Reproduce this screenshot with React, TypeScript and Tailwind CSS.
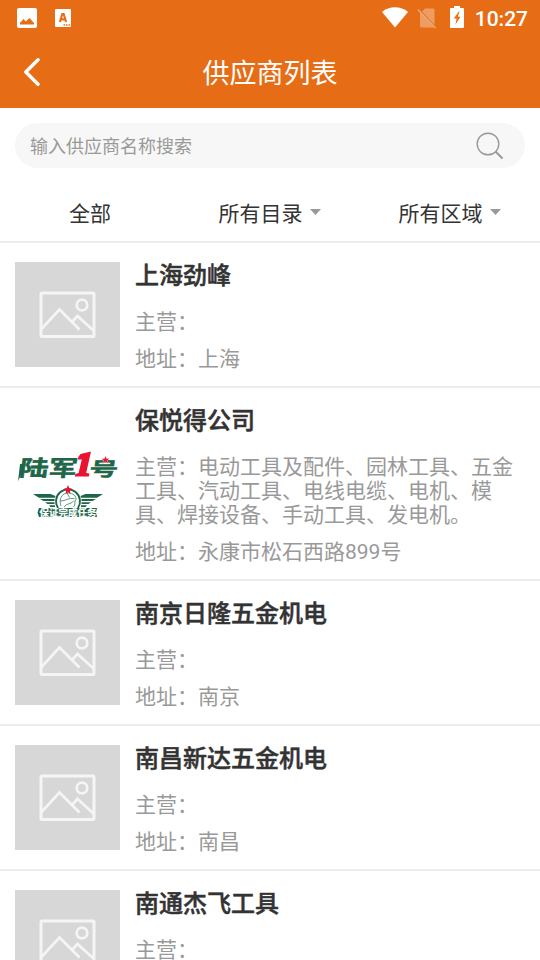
type Supplier = {
  name: string;
  business?: string;
  address: string;
  logo?: boolean;
};

const suppliers: Supplier[] = [
  { name: "上海劲峰", address: "上海" },
  {
    name: "保悦得公司",
    business:
      "电动工具及配件、园林工具、五金工具、汽动工具、电线电缆、电机、模具、焊接设备、手动工具、发电机。",
    address: "永康市松石西路899号",
    logo: true,
  },
  { name: "南京日隆五金机电", address: "南京" },
  { name: "南昌新达五金机电", address: "南昌" },
  { name: "南通杰飞工具", address: "南通" },
];

function StatusBar() {
  return (
    <div className="flex h-9 items-center justify-between pl-[17px] pr-3 text-white">
      <div className="flex items-center gap-[18px]">
        <svg width="20" height="20" viewBox="0 0 20 20">
          <rect width="20" height="20" rx="2" fill="currentColor" />
          <path d="M3 16.5V15l3.5-4 2.3 2.6L12.4 10 17 15v1.5z" fill="#e66d16" />
        </svg>
        <svg width="16" height="18" viewBox="0 0 16 18">
          <rect width="16" height="18" rx="1" fill="currentColor" />
          <path
            d="M4.9 13 7.3 5h1.4l2.4 8M5.9 10.4h4.2"
            fill="none"
            stroke="#e66d16"
            strokeWidth="2.1"
          />
          <path d="M8.5 16h1.5M11 16h1.5M13.5 16H15" stroke="#e66d16" strokeWidth="1.3" />
        </svg>
      </div>

      <div className="flex items-center">
        <svg className="mb-0.5" width="26" height="21" viewBox="0 0 26 21">
          <path d="M0 5C7-1.2 19-1.2 26 5L13 20.500z" fill="currentColor" />
        </svg>
        <svg className="ml-[9px]" width="20" height="22" viewBox="0 0 20 22">
          <path
            d="M8 1.5h8a1.500 1.500 0 0 1 1.500 1.500v15L5 4.500zM3 5.500l14 15H4.500A1.500 1.500 0 0 1 3 19z"
            fill="currentColor"
            opacity=".33"
          />
          <path d="M.8 2.500 18.500 21" stroke="currentColor" strokeWidth="1.500" opacity=".4" />
        </svg>
        <svg className="mb-0.5 ml-[13px]" width="14" height="22" viewBox="0 0 14 22">
          <path
            d="M4 0h6v2h3a1 1 0 0 1 1 1v18a1 1 0 0 1-1 1H1a1 1 0 0 1-1-1V3a1 1 0 0 1 1-1h3z"
            fill="currentColor"
          />
          <path d="M8.800 5.500 3.800 12.500h2.800L5.500 18.500l5-7.700H7.800l1.700-5.300z" fill="#e66d16" />
        </svg>
        <span className="ml-[11px] pt-px font-['Roboto',sans-serif] text-[21px] font-medium leading-9">
          10:27
        </span>
      </div>
    </div>
  );
}

function Placeholder() {
  return (
    <div className="flex size-[105px] shrink-0 items-center justify-center bg-[#d7d7d7]">
      <svg width="57" height="47" viewBox="0 0 57 47" fill="none" stroke="#f5f5f5">
        <rect x="2" y="2" width="53" height="43.500" rx="1" strokeWidth="3" />
        <circle cx="43" cy="14" r="5.300" strokeWidth="2.700" />
        <path d="M2 38.500 20.500 18.500 40.500 38.500M33 31l5.500-6L55 40" strokeWidth="2.700" />
      </svg>
    </div>
  );
}

function ArmyLogo() {
  return (
    <svg className="size-[105px] shrink-0" viewBox="0 0 105 105">
      <g
        fontFamily="'Noto Sans CJK SC', sans-serif"
        fontWeight="700"
        fill="#1e6648"
        stroke="#1e6648"
        strokeWidth=".5"
      >
        <text transform="translate(3.500 45) skewX(-8) scale(1.160 .880)" fontSize="25">
          陆军
        </text>
        <text transform="translate(73.500 44.500) skewX(-8) scale(1.200 .800)" fontSize="24">
          号
        </text>
      </g>
      {/* tail of the first character */}
      <path d="M5 33h3.500L6 43.500 3 50.500z" fill="#1e6648" />
      <path
        d="m65.500 23 10.500-2.500-4.800 21.500 3.200.500-.600 3H59.800l.600-2.500 3.200-1 3.200-13.500h-3.900l.4-2.500z"
        fill="#ea1230"
      />
      <path
        d="m90.500 24.500 1.100 3h3.200l-2.500 2 .9 3.200-2.700-1.900-2.700 1.900.9-3.200-2.500-2h3.200z"
        fill="#ea1230"
        stroke="#fff"
        strokeWidth=".4"
      />

      {/* wings */}
      <g fill="#1e6648">
        <path d="M18 63h17.500l5 2-.5 1.800H24zM25 68h14.500v2H28.500zM30 71.200h9.500v1.900h-7zM34 74.300h6V76h-4.500z" />
        <path d="M88 63H70.500l-5 2 .5 1.800h16zM81 68H66.500v2h11zM76 71.200h-9.500v1.900h7zM72 74.300h-6V76h4.500z" />
      </g>
      <path d="M43 77a12 12 0 1 1 20 0" fill="#fff" stroke="#1e6648" strokeWidth="1.900" />
      <path
        d="M46 75c-2.500-7 1-13 7-13 5 0 8.500 3 8 7M45.500 70c5 0 8-3.500 14-2.500M52 62l2.500 4.500M49 76c2-4 8-2.500 10-6.500M60.500 69c-1.500 3 .5 4-2 7"
        fill="none"
        stroke="#1e6648"
        strokeWidth=".7"
      />
      <path d="m53 54 1.200 3 3 .8-2.300 1.900.5 3.100-2.400-1.600-2.400 1.600.5-3.100-2.300-1.900 3-.8z" fill="#ea1230" />

      <path d="M24 77h58l-1 4.500 1 4.500H24l-1.500-4.500z" fill="#1e6648" />
      <text
        x="24.500"
        y="85.100"
        fontSize="9.500"
        fontWeight="700"
        textLength="57"
        lengthAdjust="spacingAndGlyphs"
        fontFamily="'Noto Sans CJK SC', sans-serif"
        fill="#fff"
        stroke="#fff"
        strokeWidth=".2"
      >
        保证完成任务
      </text>
    </svg>
  );
}

function Caret() {
  return (
    <svg className="mb-1.5 ml-[7px] mr-px" width="11" height="6" viewBox="0 0 11 6">
      <path d="M0 0h11L5.500 6z" fill="#999" />
    </svg>
  );
}

function SupplierRow({ supplier }: { supplier: Supplier }) {
  return (
    <li className="flex items-center gap-[15px] border-b-2 border-[#ededed] px-[15px] py-[15px]">
      {supplier.logo ? <ArmyLogo /> : <Placeholder />}
      <div className="min-w-0 flex-1 text-[21px] leading-6 text-[#999]">
        <h2 className="pt-px text-2xl/[34px] font-medium text-[#333] [-webkit-text-stroke:0.5px_#333]">
          {supplier.name}
        </h2>
        <p className="mt-[17px]">主营：{supplier.business}</p>
        <p className="mt-[13px]">地址：{supplier.address}</p>
      </div>
    </li>
  );
}

export default function App() {
  return (
    <div
      lang="zh-CN"
      className="h-screen w-full overflow-hidden bg-white font-['Roboto','Noto_Sans_CJK_SC',sans-serif] text-[#333]"
    >
      <header className="bg-[#e66d16] text-white">
        <StatusBar />
        <div className="flex h-[72px] items-center">
          <button type="button" aria-label="返回" className="w-16 pl-6">
            <svg width="17" height="28" viewBox="0 0 17 28" fill="none">
              <path
                d="M14 1.800 1.800 14 14 26.200"
                stroke="currentColor"
                strokeWidth="3.400"
                strokeLinecap="round"
                strokeLinejoin="round"
              />
            </svg>
          </button>
          <h1 className="flex-1 pt-1 text-center text-[27px] leading-9">供应商列表</h1>
          <div className="w-16" />
        </div>
      </header>

      <div className="px-[15px] pt-[15px]">
        <label className="flex h-[45px] items-center rounded-full bg-[#f7f7f7] pl-[15px] pr-[21px]">
          <input
            type="text"
            placeholder="输入供应商名称搜索"
            className="min-w-0 flex-1 bg-transparent pt-0.5 text-lg outline-none placeholder:text-[#999]"
          />
          <svg width="28" height="28" viewBox="0 0 28 28" fill="none" stroke="#999">
            <circle cx="12" cy="12" r="10.800" strokeWidth="1.400" />
            <path d="m19.500 19.500 7 7" strokeWidth="2" />
          </svg>
        </label>
      </div>

      <nav className="grid h-[75px] grid-cols-3 border-b-2 border-[#ededed] pt-5 text-[21px]">
        <button type="button" className="flex items-center justify-center">
          全部
        </button>
        <button type="button" className="flex items-center justify-center">
          所有目录
          <Caret />
        </button>
        <button type="button" className="flex items-center justify-center">
          所有区域
          <Caret />
        </button>
      </nav>

      <ul>
        {suppliers.map((supplier) => (
          <SupplierRow key={supplier.name} supplier={supplier} />
        ))}
      </ul>
    </div>
  );
}
